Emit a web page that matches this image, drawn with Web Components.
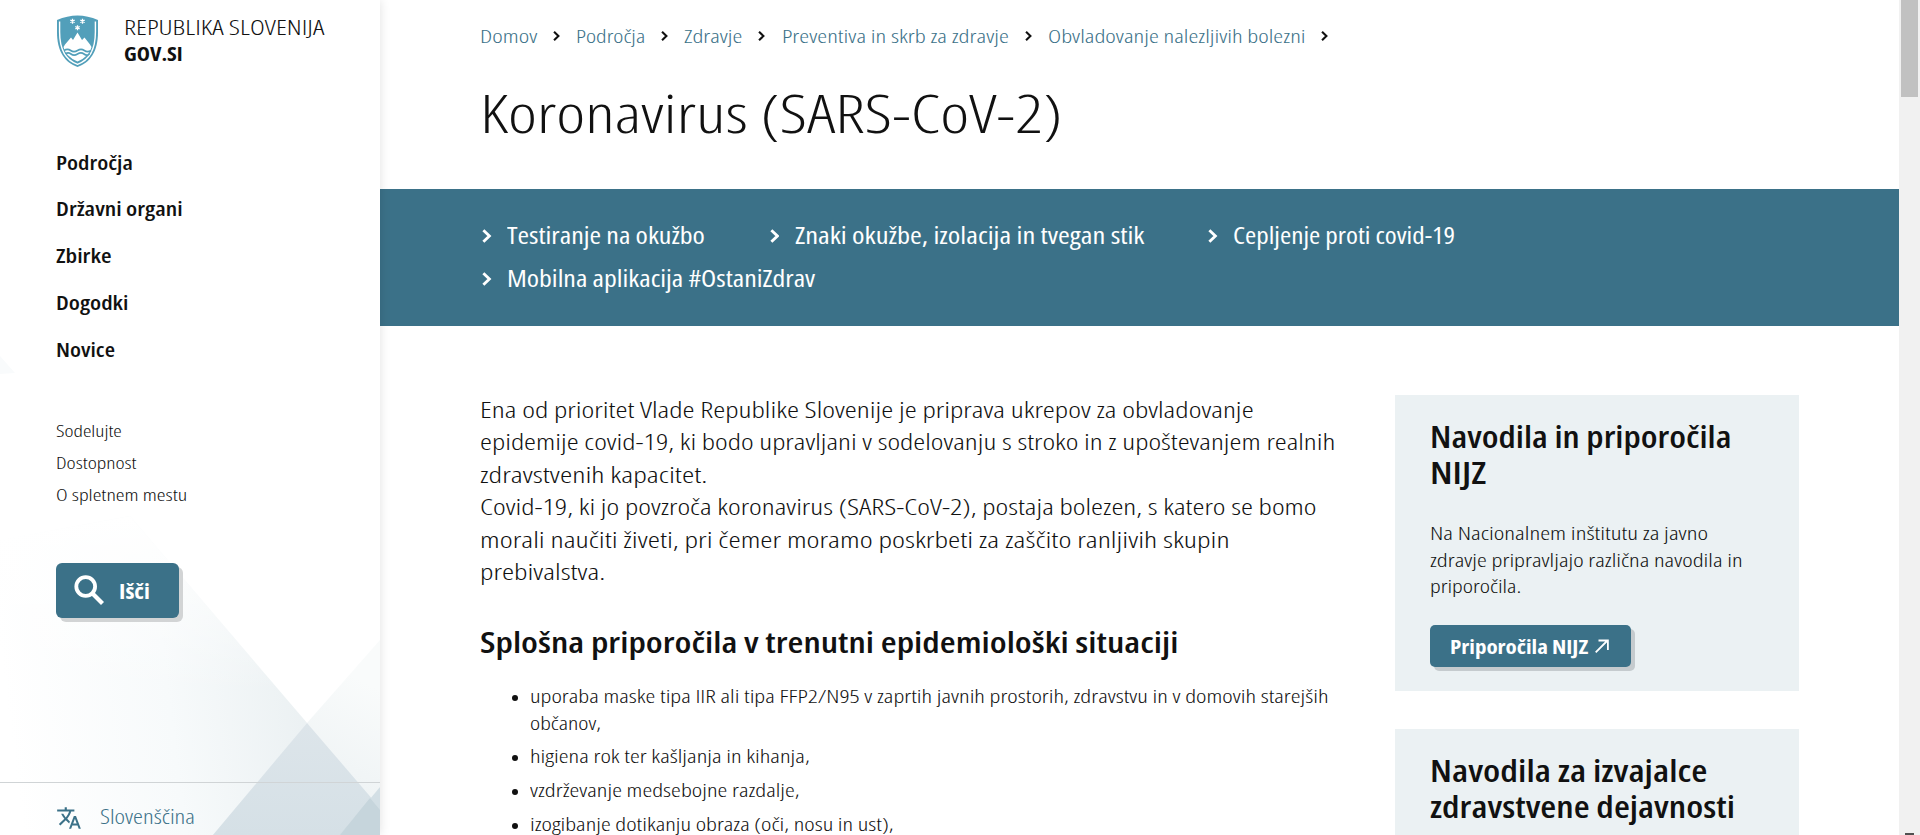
<!DOCTYPE html>
<html lang="sl">
<head>
<meta charset="utf-8">
<title>Koronavirus (SARS-CoV-2) | GOV.SI</title>
<style>
html,body{margin:0;height:100%;overflow:hidden;background:#fff}
body{font-family:"Open Sans","Noto Sans",sans-serif;font-stretch:85%;color:#111;font-weight:300}
</style>
</head>
<body>
<gov-page></gov-page>
<script>
const define = (name, html, init) => {
  const tpl = document.createElement('template');
  tpl.innerHTML = html;
  customElements.define(name, class extends HTMLElement {
    connectedCallback() {
      if (this.shadowRoot) return;
      this.attachShadow({ mode: 'open' }).append(tpl.content.cloneNode(true));
      if (init) init(this, this.shadowRoot);
    }
  });
};

/* One line of text, condensed or widened to the measure given in "w". */
define('fit-line', `<style>
:host{display:block;white-space:nowrap}
span{display:inline-block;transform-origin:0 50%;vertical-align:top}
</style><span><slot></slot></span>`, (el, root) => {
  const w = +el.getAttribute('w'), s = root.querySelector('span');
  el.style.width = w + 'px';
  s.style.transform = `scaleX(${w / s.offsetWidth})`;
  s.style.marginRight = -s.offsetWidth + 'px';
});

define('chevron-icon', `<style>:host{display:block;flex:none}svg{display:block}</style>
<svg width="100%" height="100%" viewBox="0 0 9 13" fill="none" stroke="currentColor" stroke-width="2.700"><path d="M1.300 1 7 6.500 1.300 12"/></svg>`);

define('gov-emblem', `<style>:host{display:block;width:41px;height:52px;margin-top:.5px}svg{display:block}</style>
<svg width="41" height="52" viewBox="0 0 41 52">
<path fill="#529fba" d="M0 5Q20.500-4.200 41 5V17C41 37 33 47.500 20.500 52 8 47.500 0 37 0 17Z"/>
<path fill="none" stroke="#fff" stroke-width="1.400" d="M2.600 6.500V17C2.600 35.500 9.500 45.500 20.500 49.300 31.500 45.500 38.400 35.500 38.400 17V6.500"/>
<path fill="#fff" d="M6.500 32 8 29.500 14 22.500 16 25 20.500 17.500 25 25 27.500 22.500 33 29.500 34.500 32Q33 41 20.500 46.500 8 41 6.500 32Z"/>
<g fill="none" stroke="#529fba" stroke-width="1.600"><path d="M7 35.500Q10.500 33.200 13.700 35.500T20.500 35.500 27.300 35.500 34 35.500"/><path d="M8.500 39Q11 36.800 14 39T20.500 39 27 39 32.500 39"/></g>
<g stroke="#fff" stroke-width="1.300"><path d="M15.500 3.800v5M13.300 5l4.400 2.500M17.700 5l-4.400 2.500M25.500 3.800v5M23.300 5l4.400 2.500M27.700 5l-4.400 2.500M20.500 10.300v5M18.300 11.500l4.400 2.500M22.700 11.500l-4.400 2.500"/></g>
</svg>`);

define('search-button', `<style>
:host{display:flex;align-items:center;width:123px;height:55px;box-sizing:border-box;padding-left:18px;gap:14px;border-radius:6px;background:#3b7188;box-shadow:4px 4px 0 #d2d4d5;color:#fff;font-size:20.500px;font-weight:700;line-height:28px}
svg{flex:none}fit-line{margin-top:1.500px}
</style><svg width="31" height="31" viewBox="0 0 31 31" fill="none" stroke="#fff"><circle cx="11.700" cy="11.500" r="9.400" stroke-width="3.800"/><path stroke-width="4.200" d="m18 18 10.500 10.500"/></svg><fit-line w="30.500">Išči</fit-line>`);

define('side-nav', `<style>
:host{display:block;margin-top:71.900px;font-size:20.300px;font-weight:600;line-height:46.750px}
</style><fit-line w="77.500">Področja</fit-line><fit-line w="127">Državni organi</fit-line><fit-line w="55">Zbirke</fit-line><fit-line w="72">Dogodki</fit-line><fit-line w="59.500">Novice</fit-line>`);

define('side-links', `<style>
:host{display:block;margin:42.700px 0 51.600px;font-size:16.900px;line-height:32px}
</style><fit-line w="66">Sodelujte</fit-line><fit-line w="81">Dostopnost</fit-line><fit-line w="131">O spletnem mestu</fit-line>`);

define('language-bar', `<style>
:host{display:flex;box-sizing:border-box;height:53px;margin:auto 0 0 -56px;padding:19.300px 0 0 56px;border-top:1px solid #d0d4d6;color:#3b7188;gap:17.500px;font-size:19.500px;line-height:30px}
svg{flex:none;margin-top:.5px}
</style><svg width="26" height="28" viewBox="0 0 24 26" fill="#3b7188"><path d="M12.870 16.070l-2.540-2.510.030-.030c1.740-1.940 2.980-4.170 3.710-6.530H17V5h-7V3H8v2H1v1.990h11.170C11.500 8.920 10.440 10.750 9 12.350 8.070 11.320 7.300 10.190 6.690 9h-2c.730 1.630 1.730 3.170 2.980 4.560l-5.090 5.020L4 20l5-5 3.110 3.110.760-2.040zM18.500 11h-2L12 23h2l1.120-3h4.750L21 23h2l-4.500-12zm-2.620 7l1.620-4.330L19.120 18h-3.240z" transform="translate(0 1)"/></svg><fit-line w="95">Slovenščina</fit-line>`);

define('gov-sidebar', `<style>
:host{display:flex;flex-direction:column;box-sizing:border-box;width:380px;height:835px;padding:14px 0 0 56px;box-shadow:0 0 10px rgba(0,0,0,.12);position:relative;z-index:1;background:#fff}
.art{position:absolute;inset:0;z-index:-1}
.brand{display:flex;gap:25.500px;padding-left:1px;height:52.700px;font-size:20px;line-height:26px}
.brand div{padding-top:1px}
.b{font-weight:700}
</style>
<svg class="art" width="380" height="835" viewBox="0 0 380 835">
<defs><linearGradient id="a" gradientUnits="userSpaceOnUse" x1="10" y1="730" x2="330" y2="690"><stop offset="0" stop-color="#fff"/><stop offset=".5" stop-color="#f7fafb"/><stop offset="1" stop-color="#e9eff1"/></linearGradient>
<linearGradient id="f" x1="0" y1="0" x2="0" y2="1"><stop offset="0" stop-color="#fff"/><stop offset=".55" stop-color="#fff" stop-opacity="0"/></linearGradient>
<linearGradient id="b" gradientUnits="userSpaceOnUse" x1="380" y1="690" x2="300" y2="835"><stop offset="0" stop-color="#f9fbfb"/><stop offset="1" stop-color="#e9eff1"/></linearGradient>
<linearGradient id="c" x1="0" y1="0" x2="0" y2="1"><stop offset="0" stop-color="#dde5ea"/><stop offset="1" stop-color="#d5e0e6"/></linearGradient></defs>
<path fill="#f9fbfc" d="M0 356 15 373 0 374Z"/>
<path fill="url(#a)" d="M130 516 403 835H0V540Z"/><path fill="url(#f)" d="M130 516 403 835H0V540Z"/>
<path fill="url(#b)" d="M380 640 307 723 213 835H380Z"/>
<path fill="url(#c)" d="M307 723 380 808V835H213Z"/>
<path fill="#d3dfe5" d="M380 787 340 835H380Z"/><path fill="#c6d5dc" d="M370 798 380 810V835H340Z"/>
</svg>
<div class="brand"><gov-emblem></gov-emblem><div><fit-line w="200">REPUBLIKA SLOVENIJA</fit-line><fit-line class="b" w="59">GOV.SI</fit-line></div></div>
<side-nav></side-nav><side-links></side-links><search-button></search-button><language-bar></language-bar>`);

define('bread-crumbs', `<style>
:host{display:flex;padding:23.600px 0 0 100px;font-size:18.900px;line-height:24px;color:#3b7188}
chevron-icon{width:7px;height:10px;margin:7.600px 16.200px 0 16px;color:#111}
</style><fit-line w="57">Domov</fit-line><chevron-icon></chevron-icon><fit-line w="69">Področja</fit-line><chevron-icon></chevron-icon><fit-line w="58">Zdravje</fit-line><chevron-icon></chevron-icon><fit-line w="227">Preventiva in skrb za zdravje</fit-line><chevron-icon></chevron-icon><fit-line w="257">Obvladovanje nalezljivih bolezni</fit-line><chevron-icon></chevron-icon>`);

define('page-title', `<style>:host{display:block;padding:32.600px 0 42.800px 100px;font-size:53.500px;line-height:66px}</style><fit-line w="582">Koronavirus (SARS-CoV-2)</fit-line>`);

define('quick-link', `<style>
:host{display:flex;gap:15.500px}chevron-icon{width:9.500px;height:14px;margin-top:16px}
</style><chevron-icon></chevron-icon><slot></slot>`);

define('quick-links', `<style>
:host{display:flex;flex-wrap:wrap;align-content:flex-start;column-gap:64.500px;box-sizing:border-box;height:137px;padding:23.700px 400px 0 102px;background:#3b7188;color:#fff;font-size:24px;font-weight:400;line-height:43px}
</style><quick-link><fit-line w="198">Testiranje na okužbo</fit-line></quick-link><quick-link><fit-line w="349">Znaki okužbe, izolacija in tvegan stik</fit-line></quick-link><quick-link><fit-line w="222">Cepljenje proti covid-19</fit-line></quick-link><quick-link><fit-line w="308">Mobilna aplikacija #OstaniZdrav</fit-line></quick-link>`);

define('bullet-item', `<style>
:host{display:flex;gap:12px;margin-bottom:7.600px;padding-left:32px}
i{flex:none;width:6px;height:6px;border-radius:50%;background:#111;margin-top:11.700px}
</style><i></i><div><slot></slot></div>`);

define('article-body', `<style>
:host{display:block;margin-top:-1px}
.intro{font-size:22.600px;line-height:32.500px}
h2{margin:32.800px 0 21.500px;font-size:29.300px;line-height:40px;font-weight:650}
.list{font-size:18.800px;line-height:26.300px}
</style>
<div class="intro"><fit-line w="773">Ena od prioritet Vlade Republike Slovenije je priprava ukrepov za obvladovanje</fit-line><fit-line w="855">epidemije covid-19, ki bodo upravljani v sodelovanju s stroko in z upoštevanjem realnih</fit-line><fit-line w="227">zdravstvenih kapacitet.</fit-line><fit-line w="837">Covid-19, ki jo povzroča koronavirus (SARS-CoV-2), postaja bolezen, s katero se bomo</fit-line><fit-line w="749">morali naučiti živeti, pri čemer moramo poskrbeti za zaščito ranljivih skupin</fit-line><fit-line w="125">prebivalstva.</fit-line></div>
<h2><fit-line w="698">Splošna priporočila v trenutni epidemiološki situaciji</fit-line></h2>
<div class="list"><bullet-item><fit-line w="799">uporaba maske tipa IIR ali tipa FFP2/N95 v zaprtih javnih prostorih, zdravstvu in v domovih starejših</fit-line><fit-line w="71">občanov,</fit-line></bullet-item><bullet-item><fit-line w="280">higiena rok ter kašljanja in kihanja,</fit-line></bullet-item><bullet-item><fit-line w="270">vzdrževanje medsebojne razdalje,</fit-line></bullet-item><bullet-item><fit-line w="363">izogibanje dotikanju obraza (oči, nosu in ust),</fit-line></bullet-item></div>`);

define('action-button', `<style>
:host{display:flex;box-sizing:border-box;width:201px;height:42px;padding:7.300px 0 0 20px;gap:7px;border-radius:5px;background:#3b7188;box-shadow:4px 4px 0 #c5cbce;color:#fff;font-size:20px;font-weight:700;line-height:29px}
svg{flex:none;margin-top:7px}
</style><slot></slot><svg width="14" height="14" viewBox="0 0 14 14" fill="none" stroke="#fff" stroke-width="1.800"><path d="M.7 13.300 12.500 1.500M3.500 1.500h9.400v9.400"/></svg>`);

define('info-card', `<style>
:host{display:block;padding:24.400px 35px 24px;background:#ebf1f3}
.h{font-size:30px;font-weight:600;line-height:36px}
.p{margin:28.800px 0 25.300px;font-size:18.800px;line-height:26.500px}
</style><div class="h"><slot name="title"></slot></div><div class="p"><slot></slot></div><slot name="action"></slot>`);

define('card-column', `<style>:host{display:flex;flex-direction:column;gap:38px}</style>
<info-card><div slot="title"><fit-line w="301">Navodila in priporočila</fit-line><fit-line w="56">NIJZ</fit-line></div><fit-line w="278">Na Nacionalnem inštitutu za javno</fit-line><fit-line w="312">zdravje pripravljajo različna navodila in</fit-line><fit-line w="91">priporočila.</fit-line><action-button slot="action"><fit-line w="138">Priporočila NIJZ</fit-line></action-button></info-card>
<info-card><div slot="title"><fit-line w="278">Navodila za izvajalce</fit-line><fit-line w="305">zdravstvene dejavnosti</fit-line></div></info-card>`);

define('gov-main', `<style>
:host{display:block;min-width:0}
.cols{display:grid;grid-template-columns:860px 404px;column-gap:55px;padding:69px 0 0 100px;align-items:start}
</style><bread-crumbs></bread-crumbs><page-title></page-title><quick-links></quick-links><div class="cols"><article-body></article-body><card-column></card-column></div>`);

define('scroll-rail', `<style>
:host{display:flex;flex-direction:column;justify-content:space-between;align-items:center;height:835px;background:#f1f1f1}
.t{width:17px;height:97px;background:#c1c1c1}.a{width:9px;height:2px;background:#505050}
</style><div class="t"></div><div class="a"></div>`);

define('gov-page', `<style>
:host{display:grid;grid-template-columns:380px 1519px 21px;height:835px;overflow:hidden}
</style><gov-sidebar></gov-sidebar><gov-main></gov-main><scroll-rail></scroll-rail>`);
</script>
</body>
</html>
